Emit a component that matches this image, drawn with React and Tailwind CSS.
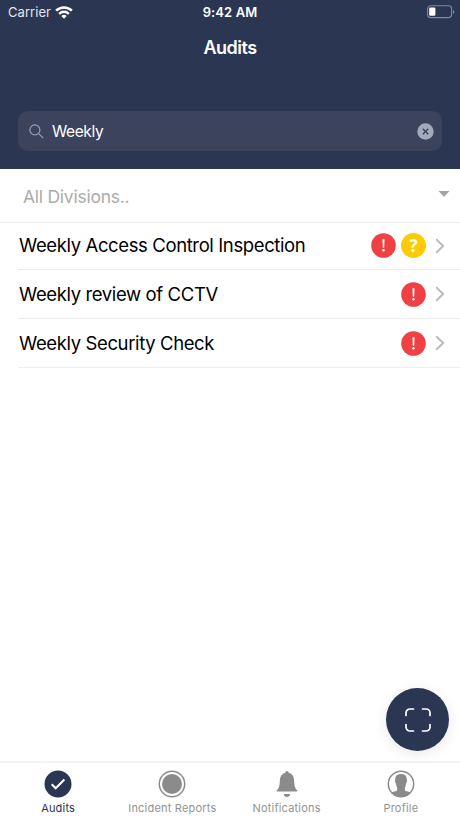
import React, { useState } from 'react';

const audits = [
  { id: 1, name: 'Weekly Access Control Inspection', overdue: true, query: true },
  { id: 2, name: 'Weekly review of CCTV', overdue: true, query: false },
  { id: 3, name: 'Weekly Security Check', overdue: true, query: false },
];

const WifiIcon = () => (
  <svg width="18" height="13" viewBox="0 0 18 13" fill="none" stroke="#fff" strokeWidth="2.4">
    <path d="M1.1 4.700a11.200 11.200 0 0 1 15.800 0" />
    <path d="M4.100 7.800a7 7 0 0 1 9.800 0" />
    <path d="M9 12.800 6.300 10.100a3.800 3.800 0 0 1 5.400 0z" fill="#fff" stroke="none" />
  </svg>
);

const BatteryIcon = () => (
  <svg width="28" height="14" viewBox="0 0 28 14">
    <rect x="0.6" y="0.8" width="24" height="11.8" rx="3" fill="none" stroke="#7f88a0" strokeWidth="1.1" />
    <rect x="2.2" y="2.6" width="6.2" height="8.2" rx="1.2" fill="#fff" />
    <path d="M26 5v4c.8-.3 1.3-1.1 1.3-2s-.5-1.7-1.3-2z" fill="#7f88a0" />
  </svg>
);

const SearchIcon = () => (
  <svg width="15" height="15" viewBox="0 0 15 15" fill="none" stroke="#98a0b8" strokeWidth="1.2" strokeLinecap="round">
    <circle cx="5.9" cy="5.9" r="5" />
    <path d="m9.6 9.6 4.2 4" />
  </svg>
);

const ClearIcon = () => (
  <svg width="17" height="17" viewBox="0 0 17 17">
    <circle cx="8.5" cy="8.5" r="8.2" fill="#a2aabb" />
    <path d="m5.8 5.8 5.4 5.4m0-5.4-5.4 5.4" stroke="#39425c" strokeWidth="1.3" />
  </svg>
);

const ChevronIcon = () => (
  <svg width="10" height="16" viewBox="0 0 10 16" fill="none" stroke="#bababd" strokeWidth="1.9">
    <path d="m1.2 1.2 7 6.800-7 6.800" />
  </svg>
);

const AlertBadge = () => (
  <svg width="25" height="25" viewBox="0 0 25 25">
    <circle cx="12.5" cy="12.5" r="12.3" fill="#ef4043" />
    <path d="M11.500 6.200h2l-.3 8.600h-1.400z" fill="#fff" />
    <circle cx="12.5" cy="17.3" r="1.2" fill="#fff" />
  </svg>
);

const QueryBadge = () => (
  <span className="flex h-[25px] w-[25px] items-center justify-center rounded-full bg-[#fdcb05] font-['Open_Sans',sans-serif] text-[17px] font-bold leading-none text-white">
    ?
  </span>
);

const ScanIcon = () => (
  <svg width="26" height="24" viewBox="0 0 26 24" fill="none" stroke="#fff" strokeWidth="1.7" strokeLinecap="round">
    <path d="M1 7.500V5a4 4 0 0 1 4-4h3.500" />
    <path d="M17.500 1H21a4 4 0 0 1 4 4v2.500" />
    <path d="M25 16.500V19a4 4 0 0 1-4 4h-3.500" />
    <path d="M8.500 23H5a4 4 0 0 1-4-4v-2.500" />
  </svg>
);

const CheckTabIcon = () => (
  <svg width="28" height="28" viewBox="0 0 28 28">
    <circle cx="14" cy="14" r="13.5" fill="#2b3652" />
    <path d="m7.700 14.300 4 4L20.400 9.600" fill="none" stroke="#fff" strokeWidth="2.1" />
  </svg>
);

const RecordTabIcon = () => (
  <svg width="28" height="28" viewBox="0 0 28 28">
    <circle cx="14" cy="14" r="12.7" fill="none" stroke="#8b8b8b" strokeWidth="1.5" />
    <circle cx="14" cy="14" r="10" fill="#8b8b8b" />
  </svg>
);

const BellTabIcon = () => (
  <svg width="28" height="28" viewBox="0 0 28 28" fill="#8b8b8b">
    <path d="M14 1c-1.100 0-1.700.8-1.700 1.700C9 3.500 7.100 6 6.900 10c-.3 5.700-.6 8.200-3.100 10.300-.5.500-.2 1.200.6 1.200h19.200c.8 0 1.100-.7.600-1.200-2.500-2.100-2.800-4.600-3.100-10.300-.2-4-2.100-6.500-5.400-7.300 0-.9-.6-1.700-1.700-1.700z" />
    <path d="M10.800 23.900h6.400c-.3 1.900-1.500 3-3.200 3s-2.900-1.100-3.200-3z" />
  </svg>
);

const ProfileTabIcon = () => (
  <svg width="28" height="28" viewBox="0 0 28 28">
    <circle cx="14" cy="14" r="12.7" fill="none" stroke="#8b8b8b" strokeWidth="1.5" />
    <path
      d="M14 3.900c-4 0-6 2.100-5.700 5.900-.6.600-.2 3.200.7 3.900.2 1.800.5 2.900 1.100 3.800v3c-.8 1-4.300 1.200-5.900 2.100A13 13 0 0 0 14 27a13 13 0 0 0 9.800-4.400c-1.600-.9-5.100-1.100-5.900-2.100v-3c.6-.9.900-2 1.100-3.800.9-.7 1.300-3.300.7-3.900.3-3.800-1.700-5.900-5.700-5.900z"
      fill="#8b8b8b"
    />
  </svg>
);

const tabs = [
  { label: 'Audits', Icon: CheckTabIcon },
  { label: 'Incident Reports', Icon: RecordTabIcon },
  { label: 'Notifications', Icon: BellTabIcon },
  { label: 'Profile', Icon: ProfileTabIcon },
];

const App = () => {
  const [search, setSearch] = useState('Weekly');
  const [activeTab, setActiveTab] = useState('Audits');

  const results = audits.filter((audit) => audit.name.toLowerCase().includes(search.toLowerCase()));

  return (
    <div className="relative flex h-[818px] w-[460px] flex-col overflow-hidden bg-white font-['Inter',sans-serif] text-black">
      {/* Header */}
      <header className="h-[169px] shrink-0 bg-[#2b3652] text-white">
        <div className="grid h-6 grid-cols-3 items-center pl-2 pr-[5px] text-[13px]">
          <div className="flex items-center gap-1">
            <span className="pt-px tracking-[0.05px] text-[#e3e6ee]">Carrier</span>
            <WifiIcon />
          </div>
          <span className="pr-[3px] pt-px text-center font-semibold tracking-[0.1px]">9:42 AM</span>
          <div className="flex justify-end">
            <BatteryIcon />
          </div>
        </div>
        <h1 className="flex h-[46px] items-center justify-center text-[18px] font-semibold tracking-[-0.5px]">Audits</h1>
        <div className="mx-[18px] mt-[41px] flex h-10 items-center rounded-[10px] bg-[#3b435d] pl-[11px] pr-2">
          <SearchIcon />
          <input
            type="text"
            className="ml-2 min-w-0 flex-1 bg-transparent pt-0.5 text-[15.5px] tracking-[-0.4px] text-white outline-none"
            value={search}
            onChange={(e) => setSearch(e.target.value)}
          />
          <button onClick={() => setSearch('')}>
            <ClearIcon />
          </button>
        </div>
      </header>

      {/* Division filter */}
      <button className="flex h-[54px] shrink-0 items-center justify-between border-b border-[#ececec] pl-[23px] pr-2.5 text-[17.5px] tracking-[-0.25px] text-[#ababab]">
        <span className="pt-[3px]">All Divisions..</span>
        <svg width="12" height="6" viewBox="0 0 12 6" className="mb-1">
          <path d="M0.500 0h11L6 6z" fill="#a3a3a3" />
        </svg>
      </button>

      {/* Audit list */}
      <ul className="flex-1">
        {results.map((audit) => (
          <li key={audit.id} className="ml-[18px] flex h-[49px] items-center border-b border-[#ececec] pr-[15px] first:h-[47px] first:pb-px">
            <span className="flex-1 pl-px pt-px text-[18.5px] tracking-[-0.38px]">{audit.name}</span>
            <div className="flex items-center gap-[5px]">
              {audit.overdue && <AlertBadge />}
              {audit.query && <QueryBadge />}
            </div>
            <span className="ml-[9px]">
              <ChevronIcon />
            </span>
          </li>
        ))}
      </ul>

      <button className="absolute left-[386px] top-[688px] flex h-[63px] w-[63px] items-center justify-center rounded-full bg-[#2b3652] shadow-[0_3px_14px_rgba(0,0,0,0.09)]">
        <ScanIcon />
      </button>

      {/* Tab bar */}
      <nav className="grid h-[57px] shrink-0 grid-cols-4 border-t-2 border-[#f3f3f3] pl-px pr-[2px]">
        {tabs.map(({ label, Icon }) => (
          <button key={label} onClick={() => setActiveTab(label)} className="flex flex-col items-center pt-[7px]">
            <Icon />
            <span
              className={`mt-[3px] whitespace-nowrap text-[11px] leading-[14px] tracking-[0.2px] ${
                activeTab === label ? 'text-[#2b3652]' : 'text-[#929292]'
              }`}
            >
              {label}
            </span>
          </button>
        ))}
      </nav>
    </div>
  );
};

export default App;
